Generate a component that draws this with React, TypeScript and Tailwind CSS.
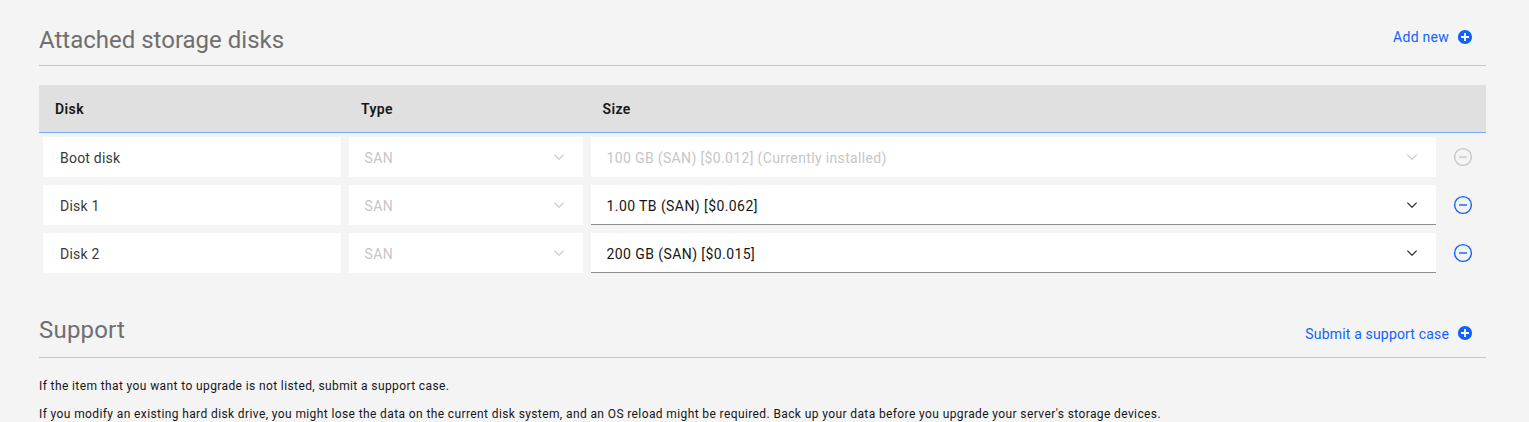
type Disk = { name: string; type: string; size: string; locked: boolean };

const disks: Disk[] = [
  { name: "Boot disk", type: "SAN", size: "100 GB (SAN) [$0.012] (Currently installed)", locked: true },
  { name: "Disk 1", type: "SAN", size: "1.00 TB (SAN) [$0.062]", locked: false },
  { name: "Disk 2", type: "SAN", size: "200 GB (SAN) [$0.015]", locked: false },
];

function AddFilled() {
  return (
    <svg className="size-4 shrink-0" viewBox="0 0 16 16" aria-hidden="true">
      <circle cx="8" cy="8" r="7.1" fill="#0f62fe" />
      <path d="M4 7.1h3.1V4h1.8v3.1H12v1.8H8.9V12H7.1V8.9H4z" fill="#fff" />
    </svg>
  );
}

function Subtract() {
  return (
    <svg className="size-5" viewBox="0 0 20 20" aria-hidden="true">
      <circle cx="10" cy="10" r="8.4" fill="none" stroke="currentColor" strokeWidth="1.4" />
      <path d="M6 9.3h8v1.4H6z" fill="currentColor" />
    </svg>
  );
}

function Chevron() {
  return (
    <svg className="size-4 shrink-0" viewBox="0 0 16 16" aria-hidden="true">
      <path d="M8 11L3 6l.7-.7L8 9.6l4.3-4.3.7.7z" fill="currentColor" />
    </svg>
  );
}

function SectionHeader({ title, action, className }: { title: string; action: string; className: string }) {
  return (
    <div className={`flex items-start justify-between border-b border-[#c6c6c6] ${className}`}>
      <h2 className="text-2xl leading-8 font-normal text-[#6f6f6f]">{title}</h2>
      <a href="#" className="flex h-8 items-center gap-2 pr-[13px] text-sm leading-8 tracking-[0.2px] text-[#0f62fe]">
        <span>{action}</span>
        <AddFilled />
      </a>
    </div>
  );
}

function Select({ value, disabled }: { value: string; disabled: boolean }) {
  return (
    <button
      disabled={disabled}
      className={`flex h-10 w-full items-center justify-between border-b bg-white pr-4 pl-[15.5px] text-left text-sm ${
        disabled ? "border-transparent tracking-[0.355px] text-[#c6c6c6]" : "border-[#8d8d8d] tracking-[0.42px] text-[#161616]"
      }`}
    >
      <span className="pt-[3px] leading-5">{value}</span>
      <Chevron />
    </button>
  );
}

export default function App() {
  return (
    <main className="h-[422px] overflow-hidden bg-[#f4f4f4] pr-[43px] pl-[39px] font-['Roboto','Liberation_Sans',sans-serif] text-[#161616]">
      <SectionHeader title="Attached storage disks" action="Add new" className="h-[66px] pt-6 [&>a]:-mt-[3px] [&>a]:tracking-[0.26px]" />

      <div className="mt-[19px]">
        <div className="grid h-12 grid-cols-[306px_242px_853px_46px] items-center border-b border-[#78a9ff] bg-[#e0e0e0] text-sm font-semibold tracking-[0.4px]">
          <span className="pl-4">Disk</span>
          <span className="pl-4">Type</span>
          <span className="pl-[15.5px]">Size</span>
        </div>
        {disks.map((d) => (
          <div key={d.name} className="grid h-12 grid-cols-[306px_242px_853px_46px] items-center">
            <div className="px-1">
              <div className="flex h-10 items-center bg-white pt-0.5 pl-[17px] text-sm tracking-[0.22px] text-[#393939]">{d.name}</div>
            </div>
            <div className="px-1">
              <Select value={d.type} disabled />
            </div>
            <div className="px-1">
              <Select value={d.size} disabled={d.locked} />
            </div>
            <button disabled={d.locked} className={`pl-[13px] ${d.locked ? "text-[#c6c6c6]" : "text-[#0f62fe]"}`}>
              <Subtract />
            </button>
          </div>
        ))}
      </div>

      <SectionHeader
        title="Support"
        action="Submit a support case"
        className="mt-[37px] h-11 [&_span]:pt-0.5 [&>a]:mt-[3px] [&>a]:tracking-[0.17px] [&>h2]:tracking-[0.2px]"
      />

      <div className="mt-5 flex flex-col gap-3 text-xs leading-4 tracking-[0.39px] whitespace-nowrap">
        <p>If the item that you want to upgrade is not listed, submit a support case.</p>
        <p>
          If you modify an existing hard disk drive, you might lose the data on the current disk system, and an OS reload
          might be required. Back up your data before you upgrade your server's storage devices.
        </p>
      </div>
    </main>
  );
}
